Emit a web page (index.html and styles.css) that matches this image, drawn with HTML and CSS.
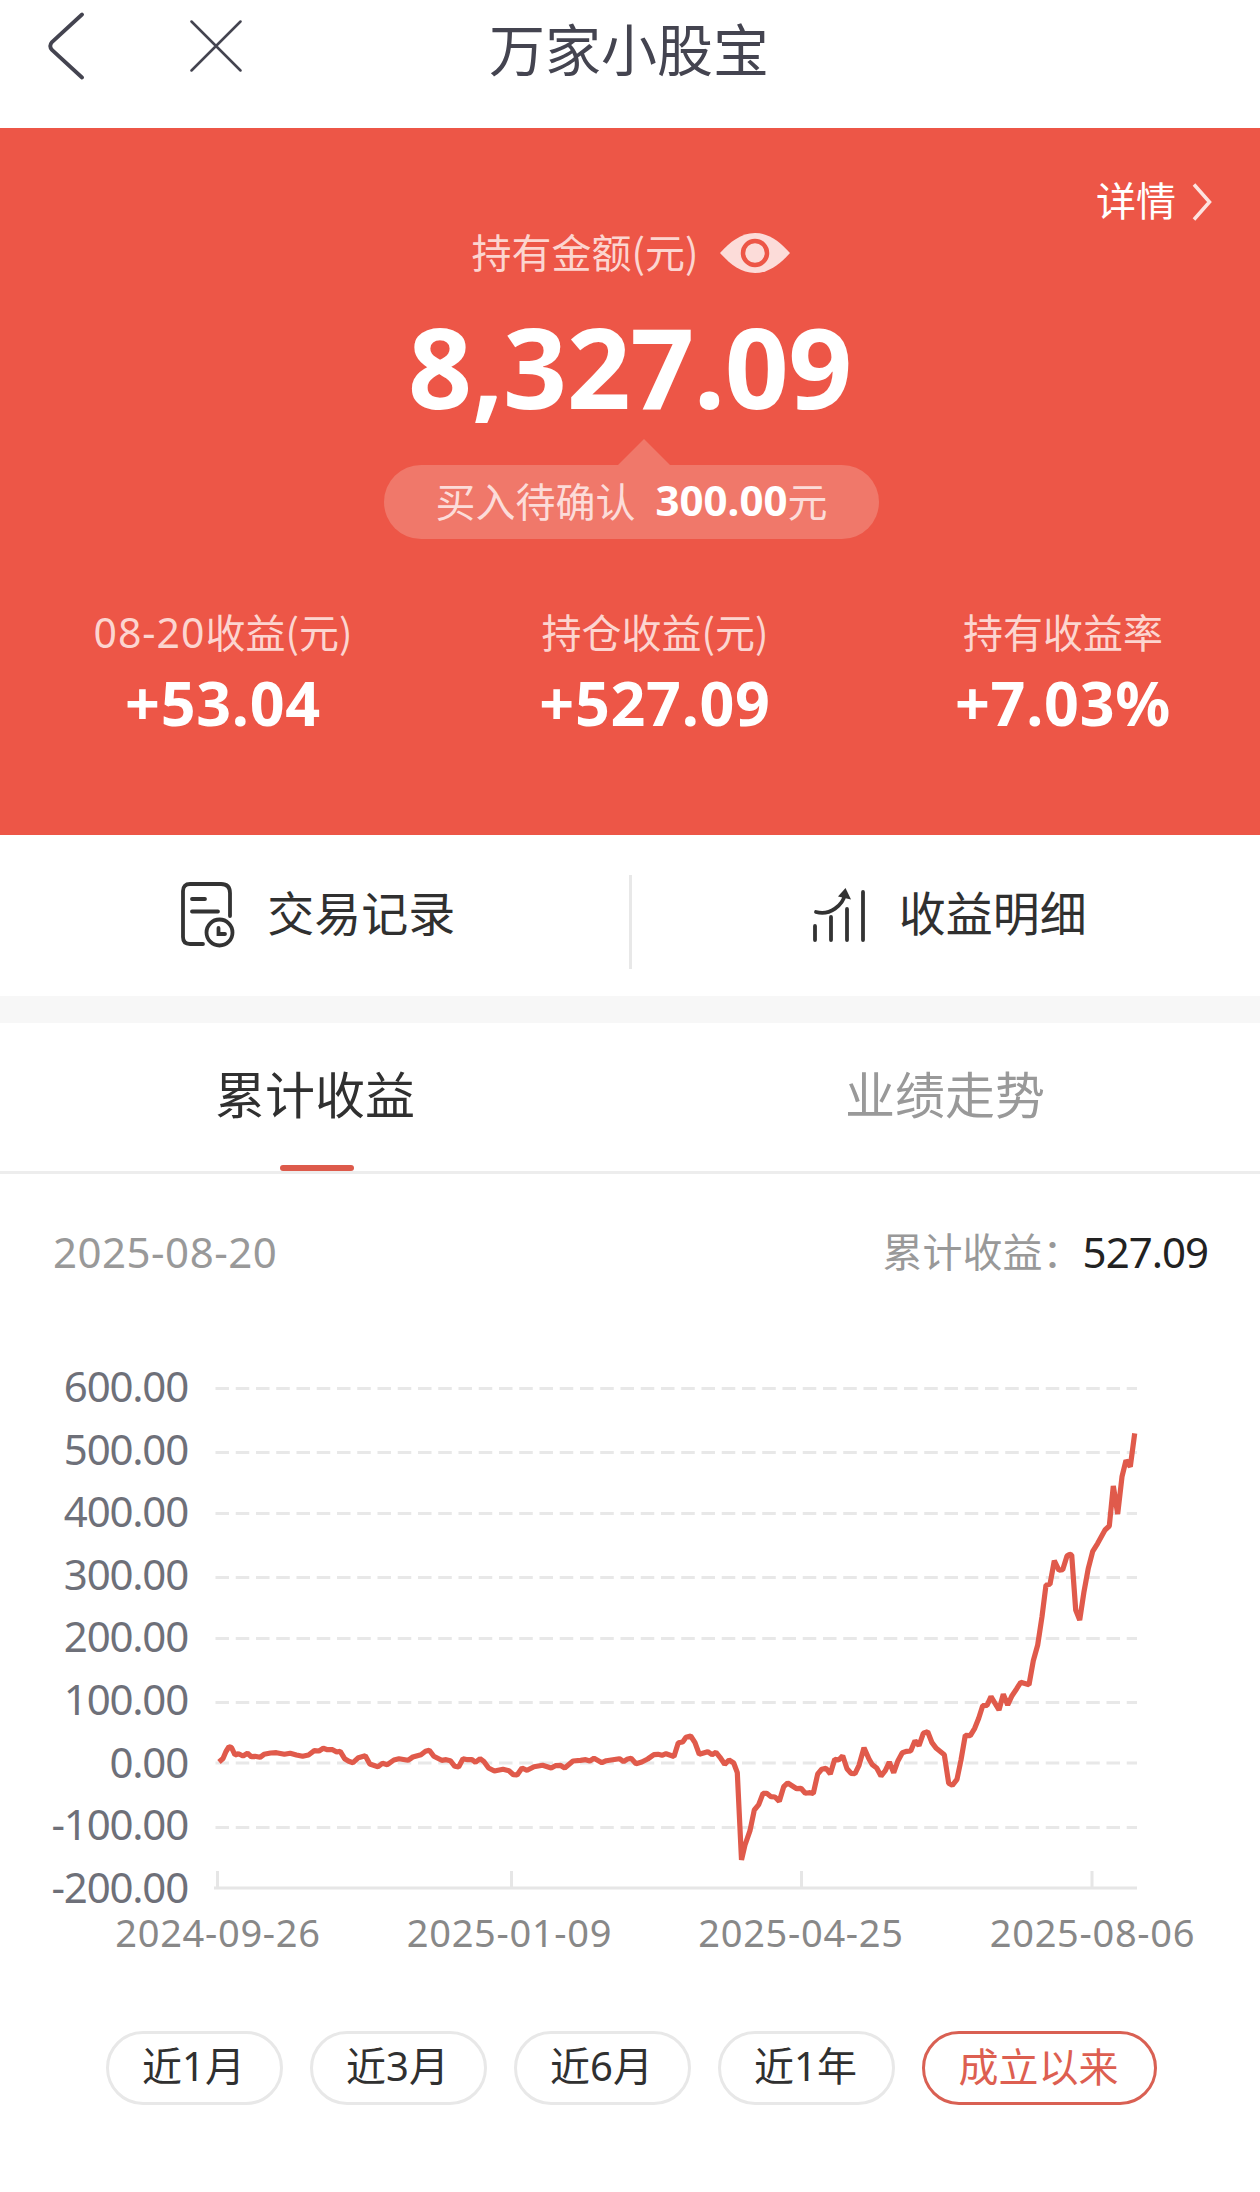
FILE: index.html
```html
<!DOCTYPE html>
<html lang="zh-CN">
<head>
<meta charset="utf-8">
<title>万家小股宝</title>
<link rel="stylesheet" href="styles.css">
</head>
<body>
<header class="navbar">
  <svg class="back" width="38" height="68" viewBox="0 0 38 68"><path d="M35 2.500 L5 30 Q1.500 34 5 38 L35 65.500"/></svg>
  <svg class="close" width="52" height="52" viewBox="0 0 52 52"><path d="M1.500 1.500 L50.500 50.500 M50.500 1.500 L1.500 50.500"/></svg>
  <h1 class="title">万家小股宝</h1>
</header>

<section class="hero">
  <a class="detail"><span>详情</span><svg width="20" height="38" viewBox="0 0 20 38"><path d="M2 1.500 L17.500 19 L2 36.500"/></svg></a>
  <div class="holding">
    <span>持有金额(元)</span>
    <svg class="eye" width="70" height="40" viewBox="0 0 70 40">
      <path class="lid" d="M0 20 C10 9 21 0 35 0 S60 9 70 20 C60 31 49 40 35 40 S10 31 0 20Z"/>
      <circle class="ring" cx="35" cy="20" r="12"/>
      <path class="pupil" d="M35 11 A8 8 0 0 0 44 20 A9 9 0 1 1 35 11Z"/>
    </svg>
  </div>
  <div class="amount num-bold">8,327.09</div>
  <div class="pending"><span>买入待确认</span><b class="num-bold">300.00</b><span>元</span></div>
  <div class="stats">
    <div class="stat"><span class="label"><span class="num">08-20</span>收益(元)</span><span class="value num-bold">+53.04</span></div>
    <div class="stat"><span class="label">持仓收益(元)</span><span class="value num-bold">+527.09</span></div>
    <div class="stat"><span class="label">持有收益率</span><span class="value num-bold">+7.03%</span></div>
  </div>
</section>

<nav class="actions">
  <a class="action">
    <svg width="54" height="66" viewBox="0 0 54 66"><path d="M49 34 V11 Q49 2 40 2 H9 Q2 2 2 9 V55 Q2 62 9 62 H22 M11 17 H24 M11 29.500 H37"/><circle cx="38.500" cy="50.500" r="13"/><path d="M37.500 46 V52 H44"/></svg>
    <span>交易记录</span>
  </a>
  <i class="divider"></i>
  <a class="action">
    <svg width="54" height="54" viewBox="0 0 54 54"><path d="M2 38 V52 M18 29 V52 M34 21 V52 M50 4 V52 M3 24 C17 28 30 17 32 6"/><path class="tip" d="M32.500 0 L38 11.500 L25 8.500Z"/></svg>
    <span>收益明细</span>
  </a>
</nav>

<nav class="tabs">
  <a class="tab active">累计收益</a>
  <a class="tab">业绩走势</a>
</nav>

<div class="summary">
  <span class="num date">2025-08-20</span>
  <span class="total"><span>累计收益：</span><b class="num">527.09</b></span>
</div>

<svg class="chart" width="1260" height="620" viewBox="0 0 1260 620">
  <g class="grid">
    <path d="M215.500 38.500H1137M215.500 102.500H1137M215.500 163.500H1137M215.500 227.500H1137M215.500 288.500H1137M215.500 352.500H1137M215.500 413H1137M215.500 477.500H1137"/>
  </g>
  <path class="axis" d="M214 538H1137M217.500 521V538M511.500 521V538M801.500 521V538M1092 521V538"/>
  <g class="ylabels">
    <text x="188" y="52">600.00</text>
    <text x="188" y="114.500">500.00</text>
    <text x="188" y="177">400.00</text>
    <text x="188" y="240">300.00</text>
    <text x="188" y="302">200.00</text>
    <text x="188" y="365">100.00</text>
    <text x="188" y="427.500">0.00</text>
    <text x="188" y="490">-100.00</text>
    <text x="188" y="553">-200.00</text>
  </g>
  <g class="xlabels">
    <text x="218" y="597">2024-09-26</text>
    <text x="509.500" y="597">2025-01-09</text>
    <text x="801" y="597">2025-04-25</text>
    <text x="1092.500" y="597">2025-08-06</text>
  </g>
  <polyline class="line" points="219,412 223,408.5 226,401.5 229,396.7 231.5,397.5 235,405 238.500,403.7 243,406 247.5,403.3 251.3,406.7 255,406.3 260,407.3 264,404.3 270.6,403 276.4,402.7 284.4,404.3 290.2,403.3 296.4,405 302.6,406.3 308.5,405 314.3,400.7 319,401 323.3,398.3 327.4,399.7 332.6,399.7 336.7,402 340.2,401.3 344.6,408.7 348.8,411.3 353,412.7 358.4,407.7 365.3,405.7 369.8,414 378,416.7 382.5,413.3 387.3,414.7 393.9,410 399,408.7 408,410.3 412.8,407 421,404.7 425.5,401.3 429.3,400.3 433.8,406.3 441.7,410.3 446.2,409.7 450.3,410.7 454.8,416.3 458.6,417 463,408.7 467.6,409.7 472,409.7 475.5,412.3 480,408.7 483.7,411.3 488.6,418 494.4,421 503,419.3 508.9,420.7 513.4,424.7 517.1,425 522,418 527.1,420.3 534,416.7 542.6,415.3 551.2,418 555.4,415.7 560.2,415.3 564.7,418 573,411 580.5,410.3 585.7,409.7 589.8,411 594,408.3 601.9,412.7 606.3,410.7 619.4,408.7 623.6,411.7 627,409.3 631.1,408.3 636,413.7 641.8,412 647.7,409 653.9,404.7 658,404.3 662,405.3 666,403.7 674,406.5 678.3,392.7 682.7,392 686,387.3 690.7,386 695,392.7 699.3,404.3 707.7,401.7 712,404.7 716,402.3 720,407.3 724.7,414.3 729,410 733.7,413 737.3,422.7 741.5,510 745,495 750,480.7 754.3,460 758.7,454.7 763,443.3 766.7,443.3 771,446.7 775,447 779.3,451.3 783.7,436.7 787.7,433 796.7,438.7 801,438.3 805.3,443.3 809,442.7 813.3,443.3 817.7,424 821.7,419.3 826,418.3 830.3,424 834.7,409.3 838.7,410 842.7,405.7 847,418.7 851,423.3 855,423.7 859,415.3 864,397.7 869,409 872.3,414.7 876.7,418 881,426 885.3,420.7 889.3,412 893.7,422.7 898,410.7 902.3,402.7 906.7,401.3 910.7,401 915,390.7 919,395.7 923.3,383.3 927.7,381.7 932,392.7 936.3,398.3 944.3,404.7 948.7,433.3 952.3,435.3 957,429.3 961,410 965.3,385.3 970.3,385.7 974.7,378.3 978.7,368.3 982.7,355.7 987,355.3 991,346.7 999,360 1003.3,344.3 1007.7,355 1012,345.7 1016.7,338.7 1020.7,332.3 1029,334.7 1033.3,310.7 1037.7,295 1042,266.7 1046,235 1050,234.3 1054.3,210.7 1059,220.3 1062.7,219.7 1067,206 1069.5,204.3 1071.7,205 1075.7,260 1079.7,270 1084,241.7 1088.3,218.3 1092.7,201.3 1097.7,193.3 1105,180 1109.3,176 1113.3,136 1117.7,164 1122,126.7 1126,110.3 1130.3,116.7 1134.7,83.3"/>
</svg>

<div class="ranges">
  <button class="range">近<span class="digit">1</span>月</button>
  <button class="range">近<span class="digit">3</span>月</button>
  <button class="range">近<span class="digit">6</span>月</button>
  <button class="range">近<span class="digit">1</span>年</button>
  <button class="range selected">成立以来</button>
</div>
</body>
</html>
```
FILE: styles.css
```css
* { box-sizing: border-box; }
body {
  margin: 0;
  width: 1260px;
  min-height: 2192px;
  background: #fff;
  color: #303030;
  font: 400 40px/1.2 "Noto Sans CJK SC", sans-serif;
}
svg { display: block; flex: none; fill: none; }
.num { font-family: "Noto Sans", "Noto Sans CJK SC", sans-serif; font-weight: 400; }
.num-bold { font-family: "Noto Sans", sans-serif; font-weight: 700; }

.navbar { position: relative; display: flex; align-items: center; height: 128px; padding: 0 0 36px 47px; }
.navbar path { stroke: #444450; stroke-width: 3.8; stroke-linecap: round; }
.navbar .close { margin-left: 105px; }
.navbar .close path { stroke-width: 2.5; }
.title { position: absolute; left: 0; right: 2px; margin: 0; text-align: center; font-size: 56px; line-height: 87px; font-weight: 400; color: #444450; }

.hero { display: flex; flex-direction: column; align-items: center; height: 707px; padding: 48px 0 0; background: #ed5647; color: #fff; }
.detail { display: flex; align-items: center; align-self: flex-end; gap: 16px; height: 52px; margin-right: 48px; }
.detail span { margin-top: -6px; }
.detail path { stroke: #fde3e0; stroke-width: 3.5; }
.holding { display: flex; align-items: center; gap: 21px; height: 52px; margin-top: -1px; padding-left: 1px; color: #fcd5d0; }
.holding span { margin-top: -4px; }
.lid { fill: #fcdcd9; }
.ring { stroke: #ed5647; stroke-width: 4.5; }
.pupil { fill: #fcdcd9; }
.amount { height: 160px; margin-top: 9px; font-size: 112px; line-height: 156px; letter-spacing: -0.5px; }
.pending { position: relative; display: flex; align-items: center; justify-content: center; width: 495px; height: 74px; margin-top: 17px; padding-bottom: 5px; border-radius: 37px; background: #f0786a; color: #fcdcd9; margin-left: 3px; }
.pending::before { content: ""; position: absolute; left: 234px; top: -26px; border: 26px solid transparent; border-top: 0; border-bottom-color: #f0786a; }
.pending b { margin: 2px 0 0 20px; font-size: 42px; color: #fff; }
.stats { display: flex; justify-content: space-between; width: 100%; padding: 66px 91px 0 93px; }
.stat { display: flex; flex-direction: column; align-items: center; width: 260px; white-space: nowrap; }
.stat:nth-child(2) { width: 230px; }
.stat:nth-child(3) { width: 212px; }
.label { height: 52px; line-height: 52px; color: #fcd5d0; }
.label .num { font-size: 41px; letter-spacing: 1px; }
.value { height: 88px; font-size: 61px; line-height: 92px; letter-spacing: 0.7px; }

.actions { display: flex; align-items: center; height: 161px; padding-bottom: 2px; font-size: 47px; }
.action { display: flex; flex: 1; align-items: center; justify-content: center; gap: 32px; padding-left: 8px; }
.action span { margin-top: -6px; }
.action path, .action circle { stroke: #333; stroke-width: 3.8; stroke-linecap: round; }
.action .tip { fill: #333; stroke: none; }
.divider { width: 3px; height: 94px; margin-top: 14px; background: #e8e8e8; }

.tabs { display: flex; height: 178px; border-top: 27px solid #f7f7f7; border-bottom: 3px solid #ededed; font-size: 50px; }
.tab { position: relative; flex: 1; text-align: center; line-height: 139px; color: #999; }
.tab.active { color: #303030; }
.tab.active::after { content: ""; position: absolute; left: 280px; bottom: 0; width: 74px; height: 6px; border-radius: 3px; background: #dd5a4b; }

.summary { display: flex; align-items: center; justify-content: space-between; height: 156px; padding: 0 52px 0 53px; color: #999; }
.summary .num { font-size: 42px; }
.summary .date { letter-spacing: 0.5px; }
.total { display: flex; align-items: center; }
.total span { margin-top: -3px; }
.total b { color: #222; letter-spacing: -1px; }

.chart { margin-top: 20px; }
.grid path { stroke: #e8e8e8; stroke-width: 3; stroke-dasharray: 13.5 6.75; }
.axis { stroke: #e6e6e6; stroke-width: 3; }
.chart text { font-family: "Noto Sans", sans-serif; }
.ylabels { font-size: 42px; letter-spacing: -1.2px; text-anchor: end; fill: #6e7079; }
.xlabels { font-size: 38px; letter-spacing: 0.7px; text-anchor: middle; fill: #888; }
.line { stroke: #e05a4b; stroke-width: 5.2; stroke-linejoin: bevel; }

.ranges { display: flex; gap: 27px; margin-top: 61px; padding-left: 106px; }
.range { width: 177px; height: 74px; padding: 0 2px 6px 0; border: 3px solid #e8e8e8; border-radius: 37px; background: #fff; color: #303030; font: inherit; }
.range .digit { font-family: "Noto Sans", sans-serif; }
.range.selected { width: 235px; border-color: #d96053; color: #dd5f51; }
```
